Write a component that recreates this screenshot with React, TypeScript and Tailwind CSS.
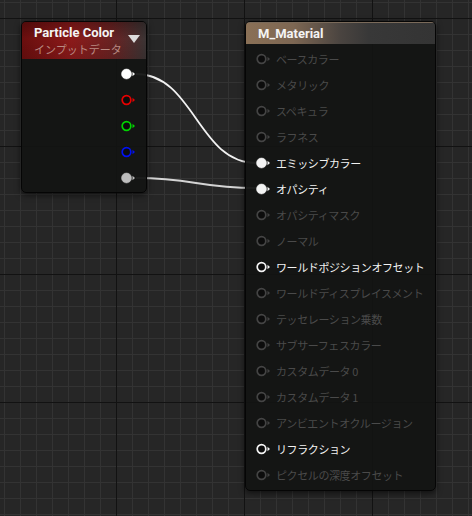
import React from "react";

type PinProps = { color: string; filled?: boolean };

const Pin = ({ color, filled }: PinProps) => (
  <svg width="16" height="12" viewBox="0 0 16 12" className="shrink-0">
    <circle cx="5.5" cy="6" r={filled ? 5 : 4.3} fill={filled ? color : "#0c0c0c"} stroke={color} strokeWidth={filled ? 0.5 : 1.7} />
    <polygon points="11.5,3.8 14,6 11.5,8.2" fill={color} />
  </svg>
);

const outputs = [
  { color: "#ffffff", filled: true },
  { color: "#e60000" },
  { color: "#00d400" },
  { color: "#0010f0" },
  { color: "#bdbdbd", filled: true },
];

type Input = { label: string; state: "linked" | "on" | "off" };

const inputs: Input[] = [
  { label: "ベースカラー", state: "off" },
  { label: "メタリック", state: "off" },
  { label: "スペキュラ", state: "off" },
  { label: "ラフネス", state: "off" },
  { label: "エミッシブカラー", state: "linked" },
  { label: "オパシティ", state: "linked" },
  { label: "オパシティマスク", state: "off" },
  { label: "ノーマル", state: "off" },
  { label: "ワールドポジションオフセット", state: "on" },
  { label: "ワールドディスプレイスメント", state: "off" },
  { label: "テッセレーション乗数", state: "off" },
  { label: "サブサーフェスカラー", state: "off" },
  { label: "カスタムデータ 0", state: "off" },
  { label: "カスタムデータ 1", state: "off" },
  { label: "アンビエントオクルージョン", state: "off" },
  { label: "リフラクション", state: "on" },
  { label: "ピクセルの深度オフセット", state: "off" },
];

const GridBackdrop = () => (
  <svg width="472" height="516" className="absolute inset-0" shapeRendering="crispEdges">
    <defs>
      <pattern id="minor" x="4" y="2" width="16" height="16" patternUnits="userSpaceOnUse">
        <path d="M0 0.5H16M0.5 0V16" stroke="#333333" strokeWidth="1" />
      </pattern>
      <pattern id="major" x="116" y="18" width="128" height="128" patternUnits="userSpaceOnUse">
        <path d="M0 0.5H128M0.5 0V128" stroke="#121212" strokeWidth="1" />
      </pattern>
    </defs>
    <rect width="472" height="516" fill="url(#minor)" />
    <rect width="472" height="516" fill="url(#major)" />
  </svg>
);

const Wires = () => (
  <svg width="472" height="516" className="absolute inset-0">
    <path d="M136 74C194 74 198 163 256 163" stroke="#f2f2f2" strokeWidth="1.8" fill="none" />
    <path d="M136 178C194 178 198 188 256 188" stroke="#d4d4d4" strokeWidth="1.8" fill="none" />
  </svg>
);

export default function App() {
  return (
    <div className="relative w-[472px] h-[516px] overflow-hidden bg-[#262626] font-['Noto_Sans_CJK_JP',sans-serif]">
      <GridBackdrop />
      <Wires />

      {/* Particle Color */}
      <div className="absolute left-[21px] top-[21px] w-[126px] flex flex-col rounded-[5px] border border-[#050505] bg-[#131413]/95 shadow-[0_2px_6px_rgba(0,0,0,0.6)] overflow-hidden">
        <div className="relative h-[37px] px-[12px] pt-[3px] bg-[linear-gradient(to_right,#6a0e0e_0%,#8c1a1a_40%,#6a2222_72%,#3b3434_100%)]">
          <div className="absolute inset-0 bg-[linear-gradient(to_bottom,rgba(0,0,0,0.25),rgba(0,0,0,0)_45%,rgba(0,0,0,0.1))]" />
          <div className="relative font-['Roboto',sans-serif] font-bold text-[13px] leading-[16px] text-[#f4f4f4]">Particle Color</div>
          <div className="relative text-[11px] leading-[16px] text-[#b98a82]">インプットデータ</div>
          <div className="absolute right-[6px] top-[13px] w-0 h-0 border-l-[6px] border-r-[6px] border-t-[8px] border-l-transparent border-r-transparent border-t-[#dcdcdc]" />
        </div>
        <div className="flex flex-col items-end pt-[2px] pb-[1px] pr-[9px]">
          {outputs.map((o, i) => (
            <div key={i} className="h-[26px] flex items-center">
              <Pin color={o.color} filled={o.filled} />
            </div>
          ))}
        </div>
      </div>

      {/* M_Material */}
      <div className="absolute left-[245px] top-[21px] w-[191px] flex flex-col rounded-[5px] border border-[#050505] bg-[#131413]/95 shadow-[0_2px_6px_rgba(0,0,0,0.6)] overflow-hidden">
        <div className="h-[22px] px-[12px] flex items-center border-t border-[#7a6a5a] bg-[linear-gradient(to_right,#8a7056_0%,#7d6753_25%,#4a4440_50%,#383838_65%,#343434_100%)]">
          <span className="font-['Roboto',sans-serif] font-bold text-[13px] text-[#f4f4f4]">M_Material</span>
        </div>
        <div className="flex flex-col pt-[2px] pb-[2px] pl-[10px]">
          {inputs.map((p) => (
            <div key={p.label} className="h-[26px] flex items-center gap-[4px]">
              <Pin color={p.state === "off" ? "#444444" : "#f4f4f4"} filled={p.state === "linked"} />
              <span className={`text-[11px] tracking-[-0.4px] ${p.state === "off" ? "text-[#4a4a4a]" : "text-[#f2f2f2]"}`}>
                {p.label}
              </span>
            </div>
          ))}
        </div>
      </div>
    </div>
  );
}
